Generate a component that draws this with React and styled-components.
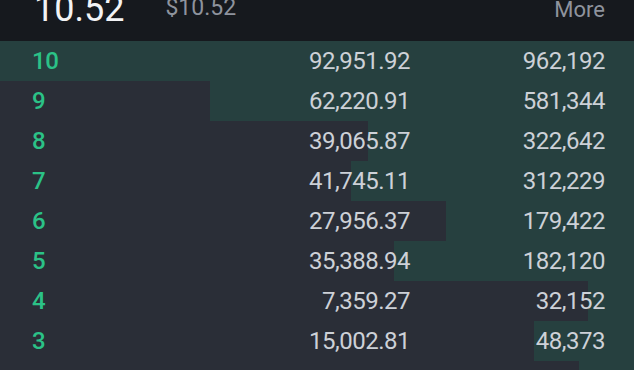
import React from "react";
import styled, { createGlobalStyle } from "styled-components";

const rows = [
  { level: 10, price: "92,951.92", amount: "962,192", depth: 634 },
  { level: 9, price: "62,220.91", amount: "581,344", depth: 424 },
  { level: 8, price: "39,065.87", amount: "322,642", depth: 266 },
  { level: 7, price: "41,745.11", amount: "312,229", depth: 283 },
  { level: 6, price: "27,956.37", amount: "179,422", depth: 188 },
  { level: 5, price: "35,388.94", amount: "182,120", depth: 240 },
  { level: 4, price: "7,359.27", amount: "32,152", depth: 46 },
  { level: 3, price: "15,002.81", amount: "48,373", depth: 100 },
  { level: 2, price: "9,871.40", amount: "51,006", depth: 55 },
];

function OrderBook() {
  return (
    <Container>
      <Header>
        <Title>10.52</Title>
        <Fiat>$10.52</Fiat>
        <MoreLink>More</MoreLink>
      </Header>
      <Book>
        {rows.map((row) => (
          <Row key={row.level}>
            <DepthBar style={{ width: `${row.depth}px` }} />
            <Level>{row.level}</Level>
            <Cell>{row.price}</Cell>
            <Cell>{row.amount}</Cell>
          </Row>
        ))}
      </Book>
    </Container>
  );
}

const GlobalStyle = createGlobalStyle`
  html, body {
    margin: 0;
    padding: 0;
    background-color: #2a2e37;
    overflow: hidden;
  }
`;

const Container = styled.div`
  width: 634px;
  height: 370px;
  overflow: hidden;
  font-family: Roboto, "Liberation Sans", sans-serif;
  background-color: #2a2e37;
`;

const Header = styled.div`
  height: 41px;
  display: flex;
  align-items: flex-start;
  padding: 0 29px 0 34px;
  overflow: hidden;
  background-color: #16191e;
  line-height: 1;
`;

const Title = styled.div`
  margin-top: -9px;
  font-size: 36px;
  color: #f2f3f5;
`;

const Fiat = styled.div`
  margin: -4px 0 0 41px;
  font-size: 23px;
  color: #8e939d;
`;

const MoreLink = styled.div`
  margin: -1px 0 0 auto;
  font-size: 22px;
  color: #8e939d;
`;

const Book = styled.div`
  display: flex;
  flex-direction: column;
`;

const Row = styled.div`
  position: relative;
  box-sizing: border-box;
  height: 40px;
  flex-shrink: 0;
  display: grid;
  grid-template-columns: 60px 1fr 195px;
  align-items: center;
  padding: 1px 29px 0 32px;
  font-size: 24px;
  letter-spacing: -0.5px;
  line-height: 39px;
  color: #cdd1d7;
`;

const DepthBar = styled.div`
  position: absolute;
  top: 0;
  right: 0;
  bottom: 0;
  background-color: #26403f;
`;

const Level = styled.span`
  position: relative;
  color: #2bc287;
  font-weight: 500;
`;

const Cell = styled.span`
  position: relative;
  text-align: right;
`;

export default function App() {
  return (
    <>
      <GlobalStyle />
      <OrderBook />
    </>
  );
}
